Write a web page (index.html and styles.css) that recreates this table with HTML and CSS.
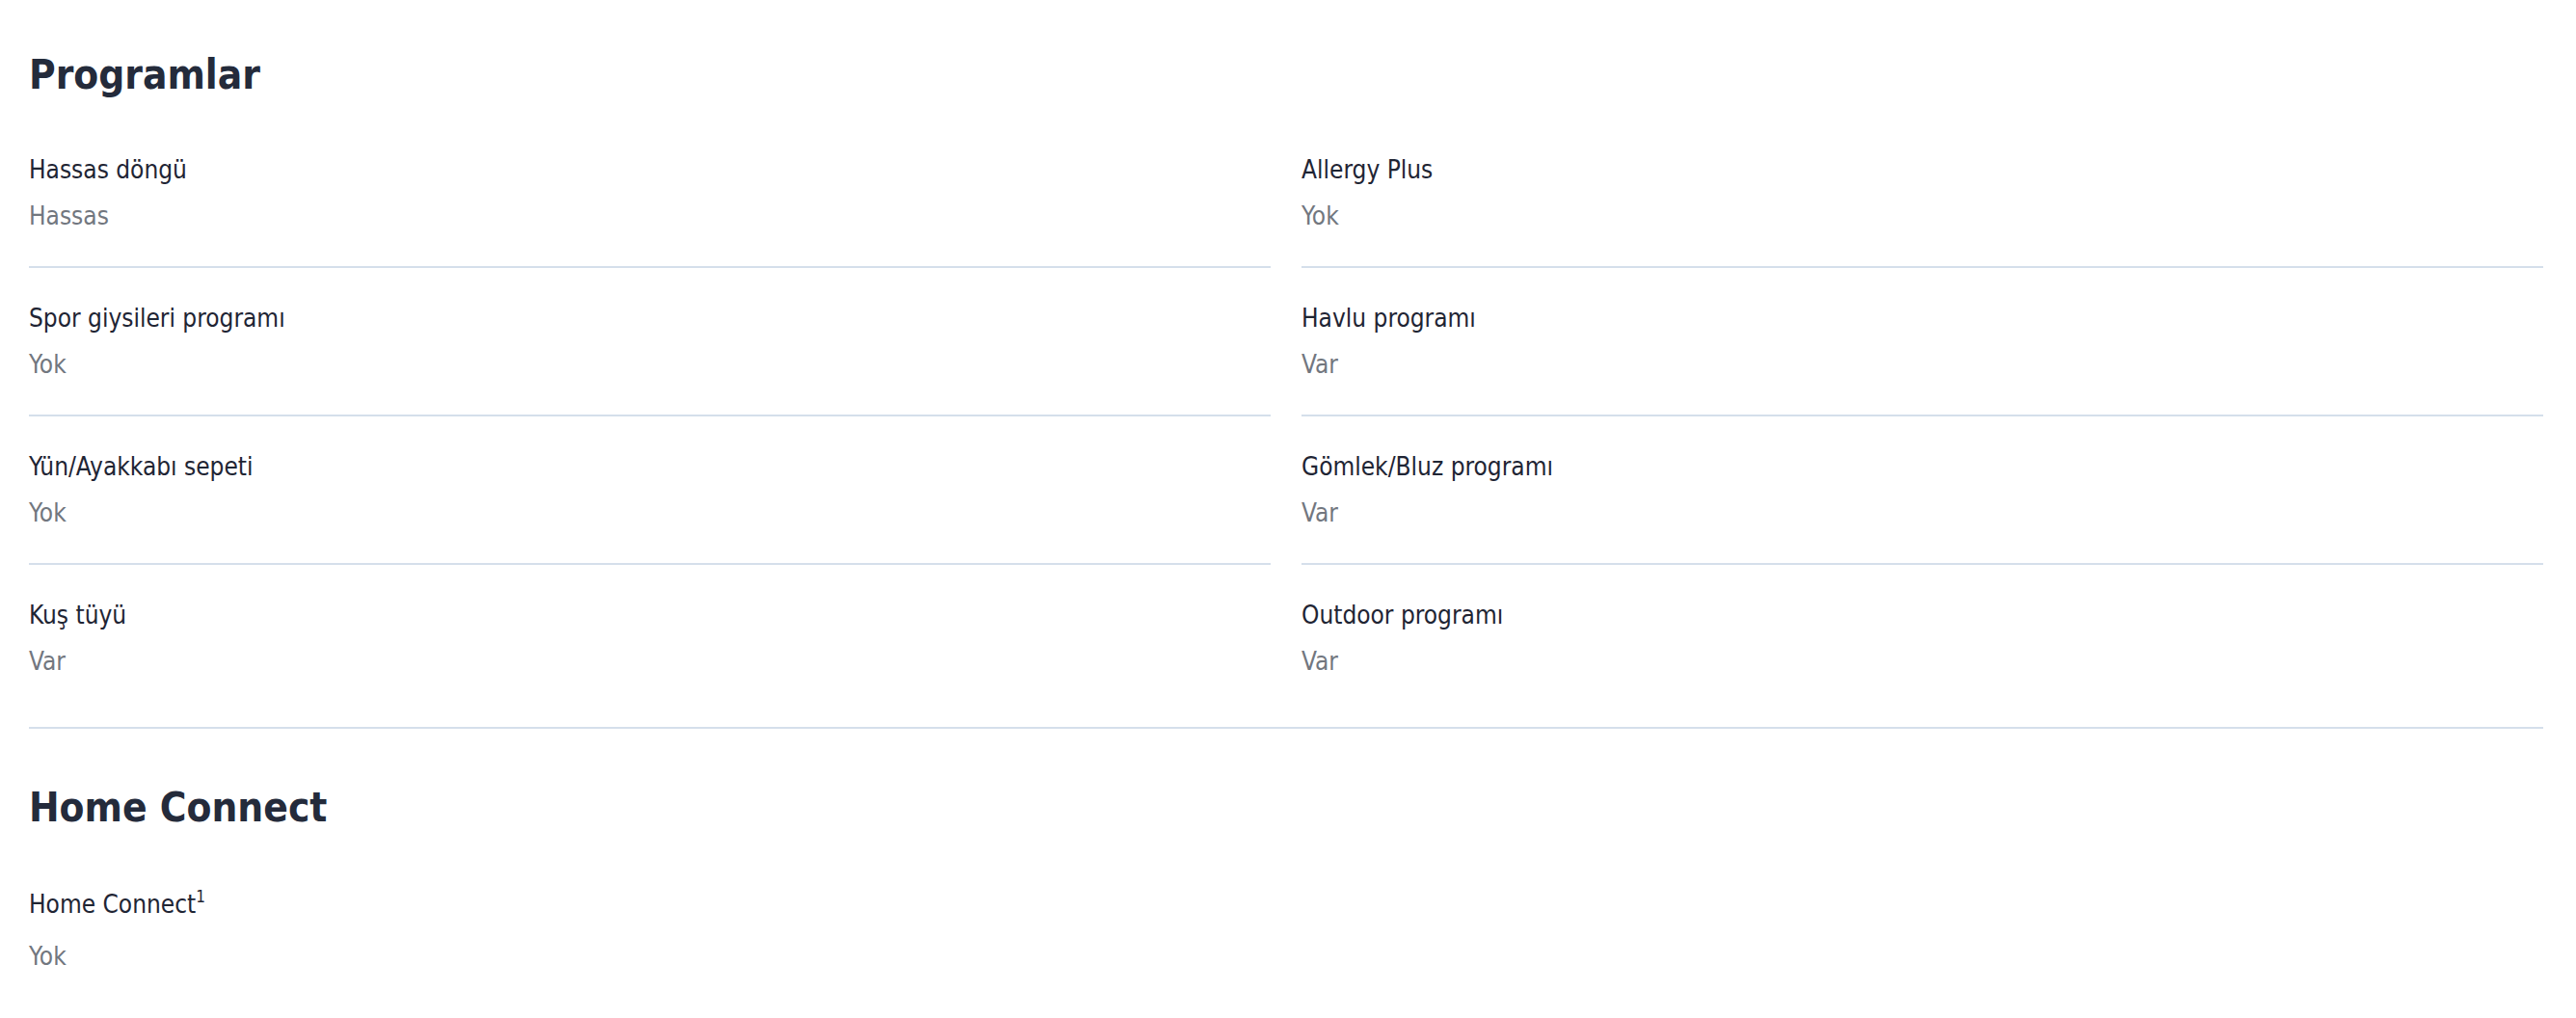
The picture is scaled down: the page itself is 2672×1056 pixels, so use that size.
FILE: index.html
```html
<!DOCTYPE html>
<html lang="tr">
<head>
<meta charset="utf-8">
<title>Programlar</title>
<link rel="stylesheet" href="styles.css">
</head>
<body>
<main class="page">
  <section class="section">
    <h2 class="section-title">Programlar</h2>
    <div class="spec-grid">
      <div class="spec">
        <div class="spec-label">Hassas döngü</div>
        <div class="spec-value">Hassas</div>
      </div>
      <div class="spec">
        <div class="spec-label">Allergy Plus</div>
        <div class="spec-value">Yok</div>
      </div>
      <div class="spec">
        <div class="spec-label">Spor giysileri programı</div>
        <div class="spec-value">Yok</div>
      </div>
      <div class="spec">
        <div class="spec-label">Havlu programı</div>
        <div class="spec-value">Var</div>
      </div>
      <div class="spec">
        <div class="spec-label">Yün/Ayakkabı sepeti</div>
        <div class="spec-value">Yok</div>
      </div>
      <div class="spec">
        <div class="spec-label">Gömlek/Bluz programı</div>
        <div class="spec-value">Var</div>
      </div>
      <div class="spec spec-last">
        <div class="spec-label">Kuş tüyü</div>
        <div class="spec-value">Var</div>
      </div>
      <div class="spec spec-last">
        <div class="spec-label">Outdoor programı</div>
        <div class="spec-value">Var</div>
      </div>
    </div>
  </section>
  <section class="section section-plain">
    <h2 class="section-title section-title-second">Home Connect</h2>
    <div class="spec-grid">
      <div class="spec spec-last spec-noted">
        <div class="spec-label">Home Connect<sup class="note">1</sup></div>
        <div class="spec-value">Yok</div>
      </div>
    </div>
  </section>
</main>
</body>
</html>
```

FILE: styles.css
```css
html, body {
  margin: 0;
  padding: 0;
  background: #ffffff;
}

body {
  font-family: "DejaVu Sans Condensed", "DejaVu Sans", "Liberation Sans Narrow", sans-serif;
  font-stretch: condensed;
  color: #1f2534;
}

.page {
  padding: 0 34px 0 30px;
}

.section {
  border-bottom: 2px solid #d5dfeb;
  padding-bottom: 16px;
}

.section-plain {
  border-bottom: none;
}

.section-title {
  margin: 50px 0 18px;
  font-size: 42px;
  line-height: 56px;
  font-weight: 700;
  color: #242b3b;
}

.section-title-second {
  margin-top: 54px;
}

.spec-grid {
  display: grid;
  grid-template-columns: 1fr 1fr;
  column-gap: 32px;
}

.spec {
  padding: 36px 0;
  border-bottom: 2px solid #d5dfeb;
  display: flex;
  flex-direction: column;
  gap: 16px;
}

.spec-last {
  border-bottom: none;
}

.spec-noted {
  padding-top: 38px;
  gap: 22px;
}

.spec-label {
  font-size: 26px;
  line-height: 32px;
  color: #1f2534;
}

.spec-value {
  font-size: 26px;
  line-height: 32px;
  color: #72777f;
}

.note {
  font-size: 17px;
  line-height: 0;
  vertical-align: 11px;
}
```
